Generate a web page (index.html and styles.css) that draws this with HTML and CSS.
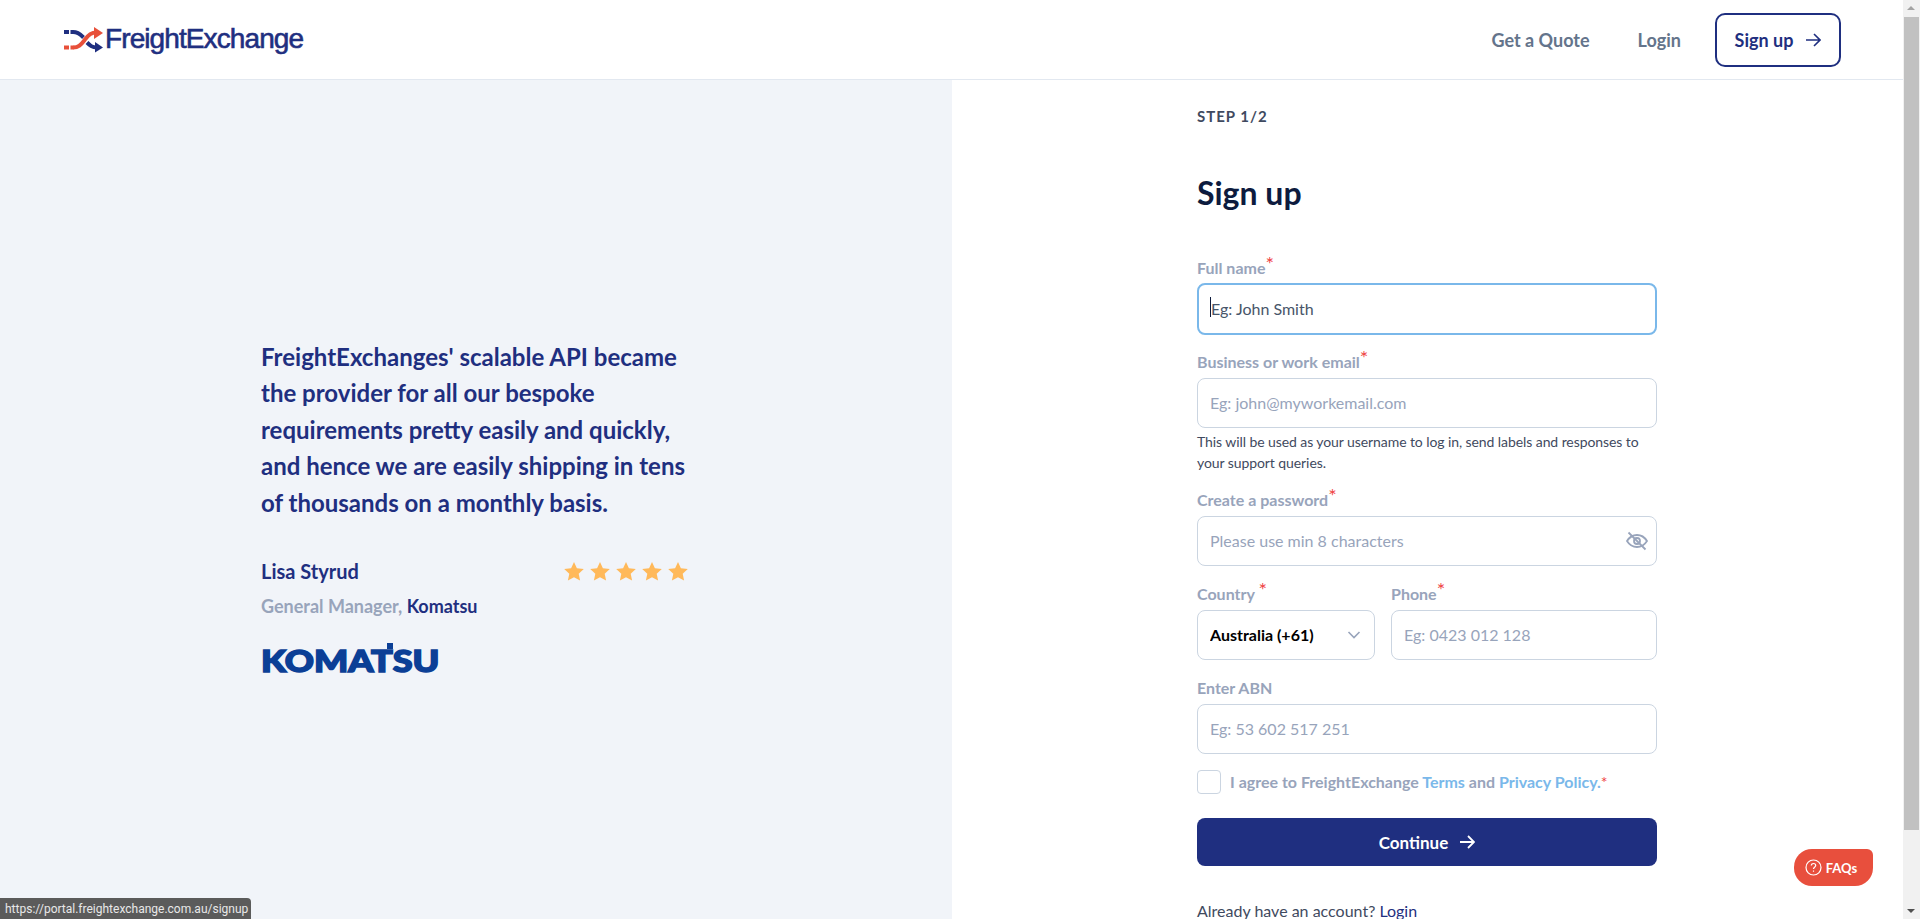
FILE: index.html
```html
<!DOCTYPE html>
<html lang="en">
<head>
    <meta charset="UTF-8">
    <meta name="viewport" content="width=device-width, initial-scale=1.0">
    <title>Sign up - FreightExchange</title>
    <link rel="stylesheet" href="styles.css">
</head>
<body>

<div class="page">
    <header class="gnb">
        <a href="#" class="logo">
            <svg class="logo-icon" width="40" height="26" viewBox="0 0 40 26" fill="none" stroke-width="4">
                <path d="M0 5h5M6.500 5h3" stroke="#1f2f80"/>
                <path d="M0 20.500h5M6.500 20.500h3" stroke="#e8503a"/>
                <path d="M9 5c6 0 8 3 10.500 5.500M23 15.500c3 3 5 5 10 5" stroke="#1f2f80"/>
                <path d="M9 20.500c6 0 8-3 12-8s6-7 12-7" stroke="#e8503a"/>
                <path d="M30 0l9 6-9 6z" fill="#e8503a" stroke="none"/>
                <path d="M31 15l8 5.500-8 5z" fill="#1f2f80" stroke="none"/>
            </svg>
            <span class="logo-text">FreightExchange</span>
        </a>
        <nav class="menu">
            <a href="#">Get a Quote</a>
            <a href="#">Login</a>
            <a href="#" class="menu-signup">Sign up
                <svg width="16" height="14" viewBox="0 0 16 14" fill="none" stroke="currentColor" stroke-width="1.600"><path d="M1 7h14M9 1l6 6-6 6"/></svg>
            </a>
        </nav>
    </header>

    <main class="split">
        <section class="testimonial">
            <div class="testimonial-inner">
                <p class="quote">FreightExchanges' scalable API became the provider for all our bespoke requirements pretty easily and quickly, and hence we are easily shipping in tens of thousands on a monthly basis.</p>
                <div class="person-row">
                    <div class="person-name">Lisa Styrud</div>
                    <div class="stars">
                        <svg width="20" height="19" viewBox="0 0 20 19"><path d="M10 0l2.900 6.300 6.900.8-5.100 4.700 1.400 6.800-6.100-3.400-6.100 3.400 1.400-6.800L.2 7.100l6.900-.8z"/></svg>
                        <svg width="20" height="19" viewBox="0 0 20 19"><path d="M10 0l2.900 6.300 6.900.8-5.100 4.700 1.400 6.800-6.100-3.400-6.100 3.400 1.400-6.800L.2 7.100l6.900-.8z"/></svg>
                        <svg width="20" height="19" viewBox="0 0 20 19"><path d="M10 0l2.900 6.300 6.900.8-5.100 4.700 1.400 6.800-6.100-3.400-6.100 3.400 1.400-6.800L.2 7.100l6.900-.8z"/></svg>
                        <svg width="20" height="19" viewBox="0 0 20 19"><path d="M10 0l2.900 6.300 6.900.8-5.100 4.700 1.400 6.800-6.100-3.400-6.100 3.400 1.400-6.800L.2 7.100l6.900-.8z"/></svg>
                        <svg width="20" height="19" viewBox="0 0 20 19"><path d="M10 0l2.900 6.300 6.900.8-5.100 4.700 1.400 6.800-6.100-3.400-6.100 3.400 1.400-6.800L.2 7.100l6.900-.8z"/></svg>
                    </div>
                </div>
                <div class="person-role">General Manager, <span>Komatsu</span></div>
                <div class="brand"><span class="brand-text">KOMATSU</span><span class="brand-tick"></span></div>
            </div>
        </section>

        <section class="signup">
            <form class="signup-form">
                <div class="step">STEP 1/2</div>
                <h1>Sign up</h1>

                <div class="field">
                    <label for="name">Full name<sup>*</sup></label>
                    <div class="input-wrap">
                        <input type="text" id="name" class="input input-focus" placeholder="Eg: John Smith">
                        <span class="caret"></span>
                    </div>
                </div>

                <div class="field">
                    <label for="email">Business or work email<sup>*</sup></label>
                    <input type="email" id="email" class="input" placeholder="Eg: john@myworkemail.com">
                    <div class="help">This will be used as your username to log in, send labels and responses to your support queries.</div>
                </div>

                <div class="field">
                    <label for="password">Create a password<sup>*</sup></label>
                    <div class="input-wrap">
                        <input type="password" id="password" class="input" placeholder="Please use min 8 characters">
                        <svg class="eye" width="22" height="20" viewBox="0 0 22 20" fill="none" stroke="#98a4bb" stroke-width="1.800">
                            <path d="M1 10c2.500-4 5.800-6 10-6s7.500 2 10 6c-2.500 4-5.800 6-10 6s-7.500-2-10-6z"/>
                            <circle cx="11" cy="10" r="3"/>
                            <path d="M2.500 1.500l17 17"/>
                        </svg>
                    </div>
                </div>

                <div class="field-row">
                    <div class="field">
                        <label for="country">Country <sup>*</sup></label>
                        <div class="input-wrap">
                            <select id="country" class="input select">
                                <option>Australia (+61)</option>
                            </select>
                            <svg class="chevron" width="14" height="8" viewBox="0 0 14 8" fill="none" stroke="#98a4bb" stroke-width="1.600"><path d="M1.500 1l5.500 5.500L12.500 1"/></svg>
                        </div>
                    </div>
                    <div class="field">
                        <label for="phone">Phone<sup>*</sup></label>
                        <input type="text" id="phone" class="input" placeholder="Eg: 0423 012 128">
                    </div>
                </div>

                <div class="field">
                    <label for="abn">Enter ABN</label>
                    <input type="text" id="abn" class="input" placeholder="Eg: 53 602 517 251">
                </div>

                <div class="agree">
                    <span class="checkbox"></span>
                    <span class="agree-text">I agree to FreightExchange <a href="#">Terms</a> and <a href="#">Privacy Policy.</a><i>*</i></span>
                </div>

                <button type="button" class="continue">Continue
                    <svg width="16" height="14" viewBox="0 0 16 14" fill="none" stroke="#fff" stroke-width="1.800"><path d="M1 7h14M9 1l6 6-6 6"/></svg>
                </button>

                <div class="have-account">Already have an account? <a href="#">Login</a></div>
            </form>
        </section>
    </main>
</div>

<a href="#" class="faq">
    <svg width="17" height="17" viewBox="0 0 17 17" fill="none" stroke="#fff" stroke-width="1.200"><circle cx="8.500" cy="8.500" r="7.500"/><path d="M6.300 6.600c0-1.300 1-2.100 2.200-2.100s2.200.8 2.200 2c0 1.700-2.200 1.700-2.200 3.400M8.500 11.500v1.300"/></svg>
    FAQs
</a>

<div class="status-link">https://portal.freightexchange.com.au/signup</div>

<div class="scrollbar">
    <span class="scroll-up"></span>
    <span class="scroll-thumb"></span>
    <span class="scroll-down"></span>
</div>

</body>
</html>
```

FILE: styles.css
```css
html, body { height: 100%; }
body { font-family: Lato, "Noto Sans", sans-serif; background-color: #fff; color: #1f2f80; margin: 0; overflow: hidden; }
a { text-decoration: none; }

.page { width: 1903px; height: 919px; overflow: hidden; display: flex; flex-direction: column; }

.gnb { flex: none; height: 79px; border-bottom: 1px solid #e2e8f0; display: flex; justify-content: space-between; align-items: center; padding: 0 62px 0 64px; background-color: #fff; }
.logo { display: flex; align-items: center; gap: 1px; color: #1f2f80; }
.logo-icon { flex: none; }
.logo-text { font-family: "Liberation Sans", Arial, sans-serif; font-size: 28px; letter-spacing: -0.900px; padding-bottom: 2px; -webkit-text-stroke: 0.600px #1f2f80; }
.menu { display: flex; align-items: center; }
.menu a { font-size: 18px; font-weight: 700; color: #64748b; margin-left: 48px; }
.menu .menu-signup { width: 126px; height: 54px; margin-left: 34px; box-sizing: border-box; border: 2px solid #1f2f80; border-radius: 10px; color: #1f2f80; display: flex; align-items: center; justify-content: center; gap: 12px; }

.split { flex: 1; display: flex; min-height: 0; }

.testimonial { flex: none; width: 952px; background-color: #f1f4f9; padding: 0 0 0 261px; box-sizing: border-box; }
.testimonial-inner { width: 427px; padding-top: 259px; }
.quote { margin: 0 0 37px; font-size: 24px; line-height: 36.400px; font-weight: 700; color: #1f2f80; }
.person-row { display: flex; justify-content: space-between; align-items: center; height: 26px; }
.person-name { font-size: 20px; font-weight: 700; }
.stars { display: flex; gap: 6px; }
.stars svg { fill: #ffb95a; }
.person-role { margin-top: 10px; font-size: 18px; font-weight: 700; color: #98a4bb; line-height: 24px; }
.person-role span { color: #1f2f80; }
.brand { position: relative; margin-top: 25px; height: 34px; display: flex; align-items: center; }
.brand-text { display: inline-block; font-size: 30px; line-height: 30px; font-weight: 900; color: #0b3f96; -webkit-text-stroke: 1.500px #0b3f96; transform: scaleX(1.200); transform-origin: left center; }
.brand-tick { position: absolute; left: 126px; top: 0; width: 6px; height: 6px; background-color: #0b3f96; }

.signup { flex: 1; padding: 0 0 0 245px; box-sizing: border-box; }
.signup-form { width: 460px; padding-top: 26px; }
.step { font-size: 15px; line-height: 20px; font-weight: 700; letter-spacing: 1px; color: #3f4a60; }
h1 { margin: 45px 0 43px; font-size: 32px; line-height: 44px; font-weight: 700; color: #0d1b3e; }

.field { margin-bottom: 18px; }
label { display: block; font-size: 16px; line-height: 20px; font-weight: 700; color: #98a4bb; margin-bottom: 6px; }
label sup { color: #ef4444; font-size: 20px; font-weight: 400; line-height: 0; vertical-align: 3px; }
.input { display: block; width: 100%; height: 50px; box-sizing: border-box; padding: 0 12px 2px; border: 1px solid #cbd5e1; border-radius: 8px; background-color: #fff; font-family: inherit; font-size: 16px; color: #000; outline: none; }
.input::placeholder { color: #98a4bb; opacity: 1; }
.input-focus { border: 2px solid #7ab8ea; height: 52px; margin: -1px 0 -1px; padding: 0 12px 2px; }
.input-focus::placeholder { color: #475569; }
.input-wrap { position: relative; }
.caret { position: absolute; left: 13px; top: 14px; width: 1px; height: 20px; background-color: #0d1b3e; }
.eye { position: absolute; right: 9px; top: 15px; }
.chevron { position: absolute; right: 14px; top: 21px; }
.select { appearance: none; font-weight: 700; }
.help { margin-top: 4px; margin-bottom: -1px; font-size: 14px; line-height: 20.500px; letter-spacing: -0.080px; color: #3f4a60; }
.field-row { display: grid; grid-template-columns: 178px 266px; column-gap: 16px; }

.agree { display: flex; align-items: center; gap: 9px; margin-top: -2px; height: 24px; font-size: 16px; font-weight: 700; color: #98a4bb; }
.agree-text { padding-bottom: 2px; }
.agree a { color: #7ab8ea; }
.agree i { color: #ef4444; font-style: normal; font-weight: 400; }
.checkbox { flex: none; width: 22px; height: 22px; border: 1px solid #cbd5e1; border-radius: 4px; background-color: #fff; }

.continue { display: flex; align-items: center; justify-content: center; gap: 11px; width: 100%; height: 48px; margin-top: 24px; border: none; border-radius: 8px; background-color: #1f2f80; color: #fff; font-family: inherit; font-size: 17px; font-weight: 700; cursor: pointer; }
.have-account { margin-top: 34px; font-size: 16px; line-height: 22px; color: #3f4a60; }
.have-account a { color: #1f2f80; }

.faq { position: fixed; left: 1794px; top: 849px; width: 79px; height: 37px; box-sizing: border-box; display: flex; align-items: center; justify-content: center; gap: 4px; padding-right: 5px; background-color: #e84f3d; color: #fff; font-size: 13px; font-weight: 700; border-radius: 18px 6px 18px 18px; }
.status-link { position: fixed; left: 0; bottom: 0; width: 251px; height: 21px; box-sizing: border-box; background-color: #5b5b5b; color: #e8e8e8; font-family: Roboto, sans-serif; font-size: 12px; line-height: 22px; padding-left: 5px; border-radius: 0 4px 0 0; white-space: nowrap; }

.scrollbar { position: fixed; top: 0; right: 0; width: 17px; height: 919px; background-color: #f1f1f1; }
.scroll-thumb { position: absolute; left: 1px; right: 1px; top: 17px; height: 813px; background-color: #c1c1c1; }
.scroll-up { position: absolute; left: 4px; top: 6px; border-left: 4px solid transparent; border-right: 4px solid transparent; border-bottom: 4px solid #a3a3a3; }
.scroll-down { position: absolute; left: 4px; bottom: 6px; border-left: 4px solid transparent; border-right: 4px solid transparent; border-top: 4px solid #505050; }
```
